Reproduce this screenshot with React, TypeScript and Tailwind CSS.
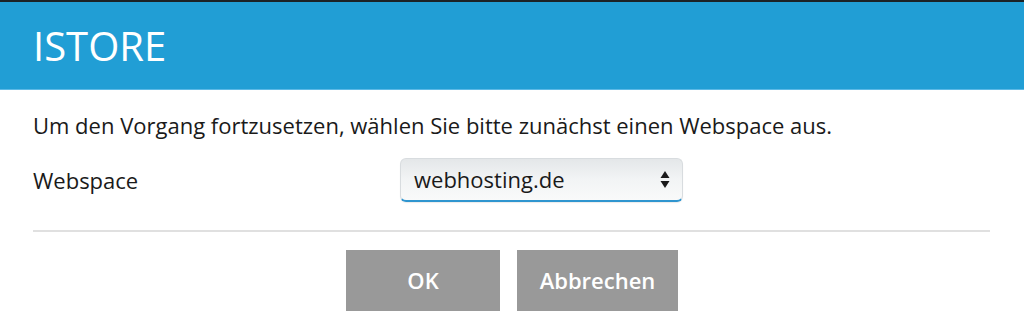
export default function App() {
  return (
    <div className="w-[1024px] h-[327px] bg-white overflow-hidden" style={{ fontFamily: '"Open Sans", sans-serif' }}>
      <div className="h-[2px] bg-[#1c2226]" />
      <div className="h-[87px] bg-[#219ed5] flex items-center pl-[33px]">
        <h1 className="text-[40px] leading-none text-white font-normal">ISTORE</h1>
      </div>
      <div className="h-[1px] bg-[#5cb9e6]" />
      <div className="px-[33px]">
        <p className="mt-[20px] text-[22px] leading-[30px] text-[#1a1a1a]">
          Um den Vorgang fortzusetzen, wählen Sie bitte zunächst einen Webspace aus.
        </p>
        <div className="flex items-center mt-[18px] h-[44px]">
          <span className="w-[367px] text-[22px] text-[#1a1a1a]">Webspace</span>
          <div className="w-[283px] h-[44px] rounded-[6px] border border-[#d8dcdf] border-b-2 border-b-[#2f95cf] bg-gradient-to-b from-[#e4e7e9] via-[#f2f4f5] to-[#f9fafa] flex items-center justify-between pl-[13px] pr-[12px] shadow-[0_1px_1px_rgba(0,0,0,0.08)]">
            <span className="text-[22px] text-[#1a1a1a]">webhosting.de</span>
            <svg width="10" height="19" viewBox="0 0 10 19">
              <path d="M5 1 L9.5 8 L0.5 8 Z" fill="#1a1a1a" />
              <path d="M5 18 L9.5 11 L0.5 11 Z" fill="#1a1a1a" />
            </svg>
          </div>
        </div>
        <div className="mt-[28px] mr-[1px] h-[2px] bg-[#e0e0e0]" />
        <div className="flex justify-center gap-[17px] mt-[18px]">
          <button className="w-[154px] h-[61px] bg-[#999999] text-white font-semibold text-[22px]">OK</button>
          <button className="w-[161px] h-[61px] bg-[#999999] text-white font-semibold text-[22px]">Abbrechen</button>
        </div>
      </div>
    </div>
  );
}
